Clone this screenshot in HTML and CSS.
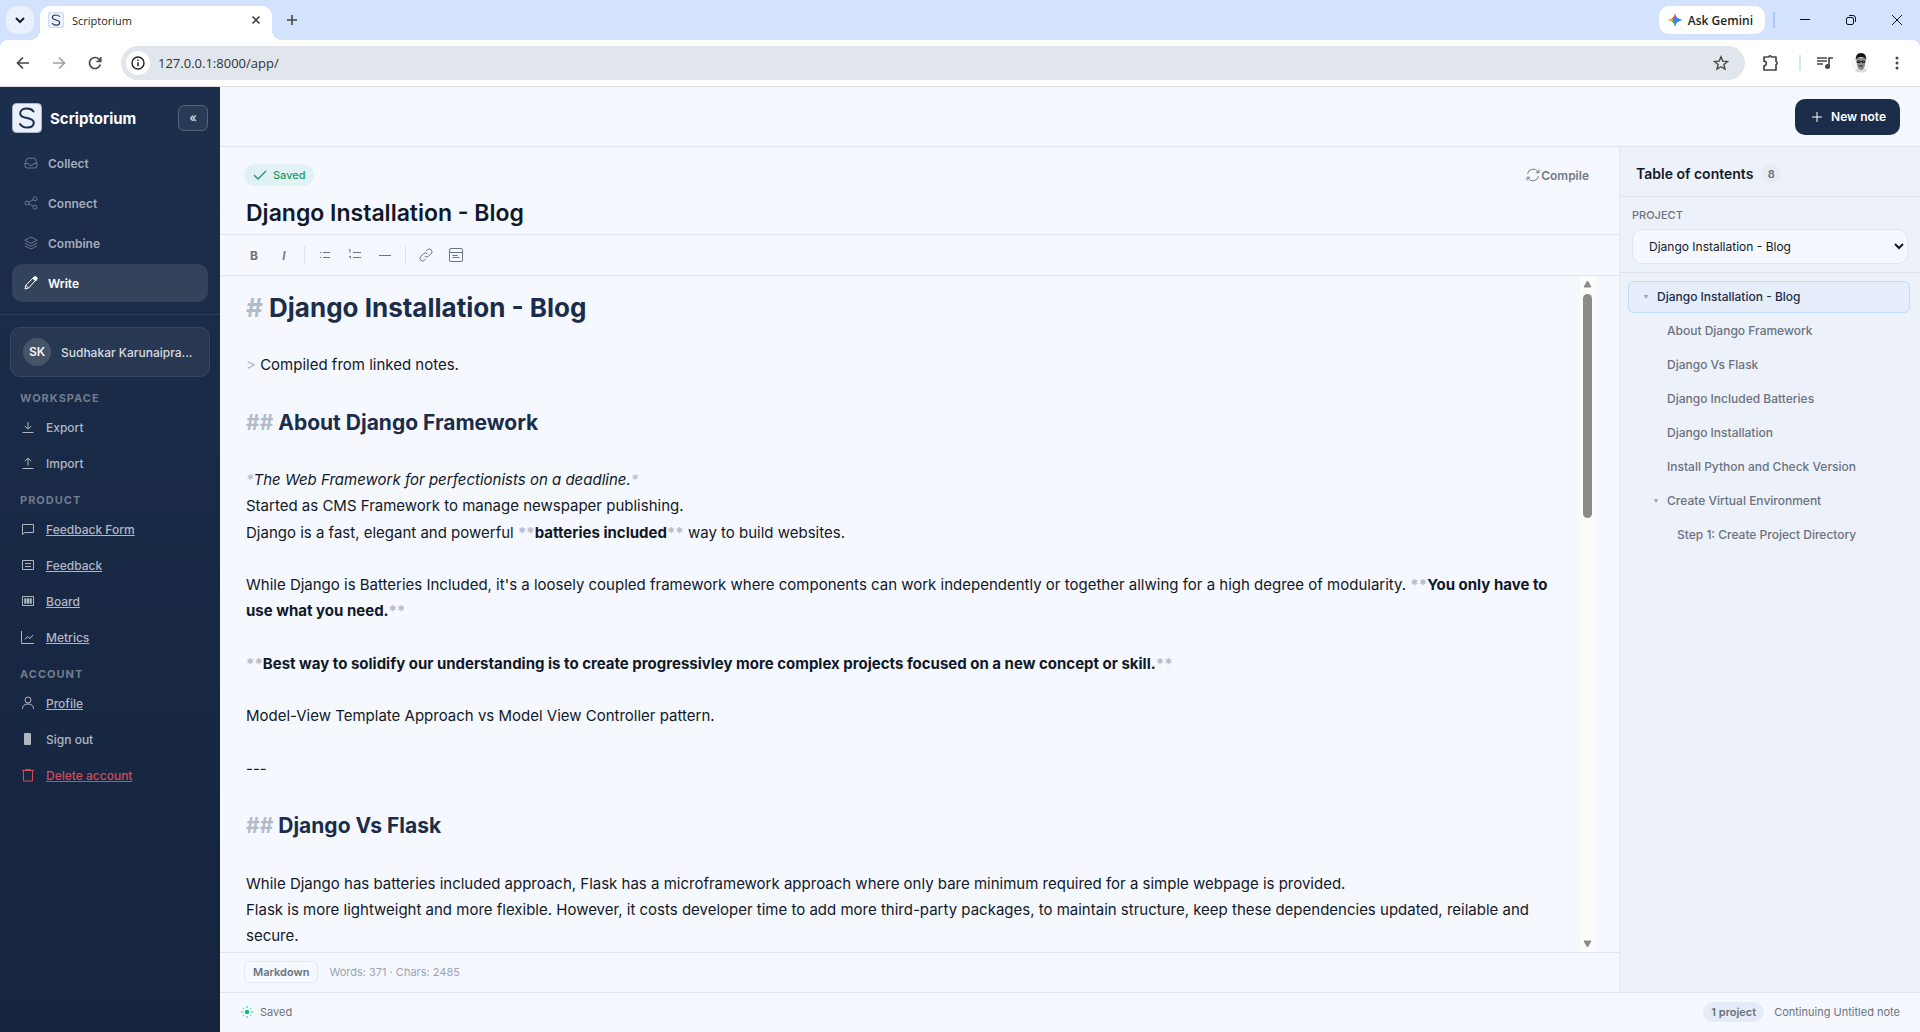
FILE: index.html
```html
<!DOCTYPE html>
<html lang="en">

<head>
    <meta charset="UTF-8">
    <meta name="viewport" content="width=device-width, initial-scale=1.0">
    <title>Scriptorium</title>
    <link rel="stylesheet" href="styles.css">
</head>

<body>

    <!-- shared icons -->
    <svg class="sprite" aria-hidden="true">
        <symbol id="logo" viewBox="0 0 30 30">
            <rect x="0.5" y="0.5" width="29" height="29" rx="4" fill="#e9effb" stroke="#a9b7cf" />
            <path d="M21.5 8.5C20 6.5 17.8 5.6 15 5.6c-4 0-6.8 1.9-6.8 4.8 0 6.400 13.600 3 13.600 9.200 0 3.200-2.800 5-6.600 5-3.200 0-5.700-1.200-7.200-3.600" fill="none" stroke="#1a2d4c" stroke-width="2" stroke-linecap="round" />
        </symbol>
    </svg>

    <header class="browser">
        <div class="tab-strip">
            <button class="tab-search" aria-label="Search tabs">
                <svg width="10" height="7" viewBox="0 0 10 7"><path d="M1 1l4 4 4-4" stroke-width="2" /></svg>
            </button>
            <div class="tab">
                <svg class="favicon" width="16" height="16"><use href="#logo" /></svg>
                <span>Scriptorium</span>
                <button class="plain" aria-label="Close tab">
                    <svg width="10" height="10" viewBox="0 0 10 10"><path d="M1.500 1.500l7 7M8.500 1.500l-7 7" stroke-width="1.600" /></svg>
                </button>
            </div>
            <button class="plain new-tab" aria-label="New tab">
                <svg width="12" height="12" viewBox="0 0 12 12"><path d="M6 1v10M1 6h10" stroke-width="1.600" /></svg>
            </button>
            <button class="gemini">
                <svg width="14" height="14" viewBox="0 0 14 14">
                    <path d="M7 0Q8 6 14 7H7z" fill="#4285f4" stroke="none" />
                    <path d="M14 7Q8 8 7 14V7z" fill="#3186ff" stroke="none" />
                    <path d="M7 14Q6 8 0 7h7z" fill="#34a865" stroke="none" />
                    <path d="M0 7Q6 6 7 0v7z" fill="#ea4335" stroke="none" />
                    <path d="M0 7l4-1 2 1-2 1z" fill="#fbbc04" stroke="none" />
                    <path d="M7 4l7 3-7 3-2-3z" fill="#3b82f6" stroke="none" />
                </svg>
                Ask Gemini
            </button>
            <span class="strip-line"></span>
            <div class="window-buttons">
                <button class="plain" aria-label="Minimize"><svg width="12" height="12" viewBox="0 0 12 12"><path d="M1 5.500h10" /></svg></button>
                <button class="plain" aria-label="Restore"><svg width="12" height="12" viewBox="0 0 12 12"><rect x="1.500" y="3.500" width="7" height="7" rx="1.500" /><path d="M4 1.500h4q2.500 0 2.500 2.500v4" /></svg></button>
                <button class="plain" aria-label="Close"><svg width="12" height="12" viewBox="0 0 12 12"><path d="M1 1l10 10M11 1L1 11" /></svg></button>
            </div>
        </div>

        <div class="address-row">
            <button class="plain" aria-label="Back"><svg width="14" height="14" viewBox="0 0 14 14"><path d="M13 7H2M7 1.500L1.500 7 7 12.500" stroke-width="1.700" /></svg></button>
            <button class="plain faded" aria-label="Forward"><svg width="14" height="14" viewBox="0 0 14 14"><path d="M1 7h11M7 1.500L12.500 7 7 12.500" stroke-width="1.700" /></svg></button>
            <button class="plain" aria-label="Reload"><svg width="14" height="14" viewBox="0 0 14 14"><path d="M12.300 8.500A5.500 5.500 0 1 1 11 3.200l1.500 1.500M12.700 1v4.300H8.500" stroke-width="1.700" /></svg></button>
            <div class="address">
                <span class="info">
                    <svg width="14" height="14" viewBox="0 0 14 14"><circle cx="7" cy="7" r="6" stroke-width="1.400" /><path d="M7 6.200v4M7 3.600v1.400" stroke-width="1.500" /></svg>
                </span>
                <input type="text" aria-label="Address" value="127.0.0.1:8000/app/">
                <button class="plain" aria-label="Bookmark"><svg width="16" height="16" viewBox="0 0 16 16"><path d="M8 1.800l1.800 4.300 4.700.4-3.600 3 1.100 4.600L8 11.700l-4 2.400 1.100-4.600-3.600-3 4.700-.4z" stroke-width="1.400" /></svg></button>
            </div>
            <button class="plain ext" aria-label="Extensions"><svg width="18" height="18" viewBox="0 0 18 18"><path d="M2 3h4.500a1.600 1.600 0 0 1 3 0H14v4.500a1.700 1.700 0 0 1 0 3.200V16H2v-4.200a2.300 2.300 0 0 0 0-4.600z" stroke-width="1.700" stroke-linejoin="round" /></svg></button>
            <span class="strip-line light"></span>
            <button class="plain media" aria-label="Media"><svg width="16" height="14" viewBox="0 0 16 14"><path d="M0 2h10M0 5h10M0 8h6M12 11V2h4" stroke-width="1.700" /><circle cx="10.500" cy="10.500" r="2.500" fill="#474747" stroke="none" /></svg></button>
            <button class="plain profile" aria-label="Profile">
                <svg width="20" height="20" viewBox="0 0 20 20">
                    <circle cx="10" cy="10" r="9.500" fill="#f7f7f7" stroke="none" />
                    <path d="M4 18q1-3 6-3t6 3q-6 3-12 0z" fill="#d9d9d9" stroke="none" />
                    <path d="M6 5h8v7q-1 5-4 5t-4-5z" fill="#8d8d8d" stroke="none" />
                    <path d="M5 8Q4 0 10 0t5 8l-1-3-4-1-4 1z" fill="#111" stroke="none" />
                    <path d="M6 8h3v1.500H6zM11 8h3v1.500h-3zM9 8.500h2M8 13h4" stroke="#222" />
                </svg>
            </button>
            <button class="plain dots" aria-label="Menu"><svg width="4" height="14" viewBox="0 0 4 14"><g fill="#474747" stroke="none"><circle cx="2" cy="2" r="1.500" /><circle cx="2" cy="7" r="1.500" /><circle cx="2" cy="12" r="1.500" /></g></svg></button>
        </div>
    </header>

    <div class="app">
        <aside class="sidebar">
            <div class="brand">
                <svg width="30" height="30"><use href="#logo" /></svg>
                <span class="brand-name">Scriptorium</span>
                <button class="collapse" aria-label="Collapse sidebar">«</button>
            </div>

            <nav class="main-nav">
                <button class="nav-item">
                    <svg width="14" height="14" viewBox="0 0 14 14"><path d="M1 7.500h3.500q.5 2 2.500 2t2.500-2H13M1 7.500V10q0 2 2 2h8q2 0 2-2V7.500L11.500 3q-.3-.8-1.200-.8H3.700q-.9 0-1.200.8z" /></svg>
                    Collect
                </button>
                <button class="nav-item">
                    <svg width="14" height="14" viewBox="0 0 14 14"><circle cx="3" cy="7" r="2" /><circle cx="11" cy="2.800" r="2" /><circle cx="11" cy="11.200" r="2" /><path d="M4.800 6.100l4.400-2.300M4.800 7.900l4.400 2.300" /></svg>
                    Connect
                </button>
                <button class="nav-item">
                    <svg width="14" height="14" viewBox="0 0 14 14"><path d="M7 1L.8 4.200 7 7.300l6.200-3.100zM.8 7L7 10.200 13.200 7M.8 9.900L7 13l6.200-3.100" /></svg>
                    Combine
                </button>
                <button class="nav-item active">
                    <svg width="14" height="14" viewBox="0 0 14 14"><path d="M1 13l.8-3.700L10.200.9q1-.7 2 .3t.4 2L4.600 12zM9 2.200l2.800 2.800M1.800 9.300L4.600 12" /><path d="M9 2.200L10.500 1h2l.7 1.500L11.800 5z" fill="#fff" /></svg>
                    Write
                </button>
            </nav>

            <div class="account">
                <button class="user-card">
                    <span class="avatar">SK</span>
                    <span class="user-name">Sudhakar Karunaipra...</span>
                </button>

                <h2 class="group">Workspace</h2>
                <button class="menu-item"><svg width="14" height="14" viewBox="0 0 14 14"><path d="M1.500 12.500h11M7 2v7M3.800 6L7 9.200 10.200 6" /></svg>Export</button>
                <button class="menu-item"><svg width="14" height="14" viewBox="0 0 14 14"><path d="M1.500 12.500h11M7 9.500V2M3.800 5.200L7 2l3.200 3.200" /></svg>Import</button>

                <h2 class="group">Product</h2>
                <a class="menu-item" href="#"><svg width="14" height="14" viewBox="0 0 14 14"><path d="M1.500 2.500h11v8H4l-2.500 2z" /></svg>Feedback Form</a>
                <a class="menu-item" href="#"><svg width="14" height="14" viewBox="0 0 14 14"><path d="M1.500 2.500h11v9h-11zM4 5.500h6M4 8.500h6" /></svg>Feedback</a>
                <a class="menu-item" href="#"><svg width="14" height="14" viewBox="0 0 14 14"><path d="M1.500 2.500h11v9h-11z" /><path d="M3.500 4.500h2v5h-2zM6 4.500h2v5H6zM8.500 4.500h2v5h-2z" fill="currentColor" stroke="none" /><path d="M4 4v6M7 4v6M10 4v6" /></svg>Board</a>
                <a class="menu-item" href="#"><svg width="14" height="14" viewBox="0 0 14 14"><path d="M.5 1v12.500H13M4 9.500l2.500-3 2.500 2 3-3.500" /></svg>Metrics</a>

                <h2 class="group">Account</h2>
                <a class="menu-item" href="#"><svg width="14" height="14" viewBox="0 0 14 14"><circle cx="7" cy="4" r="3" /><path d="M1.500 13q0-5 5.500-5t5.500 5" /></svg>Profile</a>
                <button class="menu-item"><svg width="14" height="14" viewBox="0 0 14 14"><rect x="3" y="1" width="7" height="12" rx="1" fill="currentColor" stroke="none" /></svg>Sign out</button>
                <a class="menu-item danger" href="#"><svg width="14" height="14" viewBox="0 0 14 14"><path d="M1 2.500h12M4.500 2.500v-1h5v1M2.500 2.500V13h9V2.500" /></svg>Delete account</a>
            </div>
        </aside>

        <div class="workspace">
            <div class="topbar">
                <button class="new-note">
                    <svg width="12" height="12" viewBox="0 0 12 12"><path d="M6 1v10M1 6h10" /></svg>
                    New note
                </button>
            </div>

            <div class="panels">
                <main class="editor">
                    <div class="editor-head">
                        <div class="head-row">
                            <span class="saved-pill">
                                <svg width="14" height="10" viewBox="0 0 14 10"><path d="M1 5l4 4 8-8" stroke-width="1.300" /></svg>
                                Saved
                            </span>
                            <button class="compile">
                                <svg width="14" height="14" viewBox="0 0 14 14"><path d="M1.500 6A5.600 5.600 0 0 1 12 4.200M12.500 8A5.600 5.600 0 0 1 2 9.800M13 1.500v3.200H9.800M1 12.500V9.300h3.200" /></svg>
                                Compile
                            </button>
                        </div>
                        <input class="note-title" type="text" aria-label="Note title" value="Django Installation - Blog">
                    </div>

                    <div class="format-bar">
                        <button aria-label="Bold"><b>B</b></button>
                        <button aria-label="Italic"><i>I</i></button>
                        <span class="bar-line"></span>
                        <button aria-label="Bulleted list"><svg width="14" height="14" viewBox="0 0 14 14"><path d="M5 4.500h7M5 9.500h7M2 4.500h1M2 9.500h1" /></svg></button>
                        <button aria-label="Numbered list"><svg width="14" height="14" viewBox="0 0 14 14"><path d="M5 4.500h8M5 9.500h8M1 1.500h1v3M1 8.500h1.500v2" /></svg></button>
                        <button aria-label="Divider"><svg width="14" height="14" viewBox="0 0 14 14"><path d="M1 7.500h12" /></svg></button>
                        <span class="bar-line"></span>
                        <button aria-label="Link"><svg width="14" height="14" viewBox="0 0 14 14"><path d="M5.800 8.200a2.600 2.600 0 0 0 3.700 0l2.700-2.700a2.600 2.600 0 0 0-3.700-3.700L7.200 3.100M8.200 5.800a2.600 2.600 0 0 0-3.700 0L1.800 8.500a2.600 2.600 0 0 0 3.700 3.700l1.300-1.300" /></svg></button>
                        <button aria-label="Embed"><svg width="14" height="14" viewBox="0 0 14 14"><rect x="0.500" y="0.500" width="13" height="13" rx="1.500" /><path d="M.5 4.500h13M3.500 7.500h5M3.500 9.500h7" /></svg></button>
                    </div>

                    <div class="page">
                        <article class="markdown">
                            <h1><span class="mark">#</span> Django Installation - Blog</h1>
                            <br>
                            <p><span class="mark">&gt;</span> Compiled from linked notes.</p>
                            <br>
                            <h2><span class="mark">##</span> About Django Framework</h2>
                            <br>
                            <p><em><span class="mark">*</span>The Web Framework for perfectionists on a deadline.<span class="mark">*</span></em></p>
                            <p>Started as CMS Framework to manage newspaper publishing.</p>
                            <p>Django is a fast, elegant and powerful <strong><span class="mark">**</span>batteries included<span class="mark">**</span></strong> way to build websites.</p>
                            <br>
                            <p>While Django is Batteries Included, it's a loosely coupled framework where components can work independently or together allwing for a high degree of modularity. <strong><span class="mark">**</span>You only have to use what you need.<span class="mark">**</span></strong></p>
                            <br>
                            <p><strong><span class="mark">**</span>Best way to solidify our understanding is to create progressivley more complex projects focused on a new concept or skill.<span class="mark">**</span></strong></p>
                            <br>
                            <p>Model-View Template Approach vs Model View Controller pattern.</p>
                            <br>
                            <p>---</p>
                            <br>
                            <h2><span class="mark">##</span> Django Vs Flask</h2>
                            <br>
                            <p>While Django has batteries included approach, Flask has a microframework approach where only bare minimum required for a simple webpage is provided.</p>
                            <p>Flask is more lightweight and more flexible. However, it costs developer time to add more third-party packages, to maintain structure, keep these dependencies updated, reilable and secure.</p>
                        </article>
                        <div class="scrollbar" aria-hidden="true">
                            <svg width="9" height="8" viewBox="0 0 9 8"><path d="M4.500 1L8 7H1z" /></svg>
                            <div class="track"><div class="thumb"></div></div>
                            <svg width="9" height="8" viewBox="0 0 9 8"><path d="M4.500 7L8 1H1z" /></svg>
                        </div>
                    </div>

                    <div class="editor-foot">
                        <span class="format-tag">Markdown</span>
                        <span>Words: 371 · Chars: 2485</span>
                    </div>
                </main>

                <aside class="toc">
                    <div class="toc-head">
                        <h2>Table of contents</h2>
                        <span class="count">8</span>
                    </div>
                    <div class="project">
                        <label for="project-select">Project</label>
                        <select id="project-select">
                            <option>Django Installation - Blog</option>
                        </select>
                    </div>
                    <nav class="toc-list">
                        <a class="current open" href="#">Django Installation - Blog</a>
                        <a class="level-2" href="#">About Django Framework</a>
                        <a class="level-2" href="#">Django Vs Flask</a>
                        <a class="level-2" href="#">Django Included Batteries</a>
                        <a class="level-2" href="#">Django Installation</a>
                        <a class="level-2" href="#">Install Python and Check Version</a>
                        <a class="level-2 open" href="#">Create Virtual Environment</a>
                        <a class="level-3" href="#">Step 1: Create Project Directory</a>
                    </nav>
                </aside>
            </div>

            <footer class="status">
                <svg width="12" height="12" viewBox="0 0 12 12"><circle cx="6" cy="6" r="2.200" fill="#10b981" /><g fill="#6fd6b3"><circle cx="6" cy="1" r="1" /><circle cx="6" cy="11" r="1" /><circle cx="1" cy="6" r="1" /><circle cx="11" cy="6" r="1" /><circle cx="2.500" cy="2.500" r=".8" /><circle cx="9.500" cy="2.500" r=".8" /><circle cx="2.500" cy="9.500" r=".8" /><circle cx="9.500" cy="9.500" r=".8" /></g></svg>
                <span>Saved</span>
                <span class="project-count">1 project</span>
                <span>Continuing Untitled note</span>
            </footer>
        </div>
    </div>

</body>

</html>
```

FILE: styles.css
```css
* {
    box-sizing: border-box;
}

body {
    margin: 0;
    height: 100vh;
    display: flex;
    flex-direction: column;
    overflow: hidden;
    font-family: Inter, sans-serif;
    font-size: 12px;
    color: #111827;
    background: #f5f8ff;
}

button,
input,
select {
    font-family: inherit;
    font-size: inherit;
    color: inherit;
}

button {
    border: none;
    background: none;
    padding: 0;
    cursor: pointer;
}

h1,
h2,
p {
    margin: 0;
}

svg {
    flex: none;
    fill: none;
    stroke: currentColor;
}

.sprite {
    display: none;
}

/* Browser frame */
.browser {
    flex: none;
    font-family: "Open Sans", sans-serif;
    color: #1f1f1f;
    background: #d3e2fd;
    border-bottom: 1px solid #dcdfe3;
}

.tab-strip {
    display: flex;
    align-items: center;
    height: 40px;
    padding: 0 6px;
}

.plain {
    display: flex;
    align-items: center;
    justify-content: center;
    flex: none;
    width: 24px;
    height: 24px;
    color: #474747;
}

.tab-search {
    display: flex;
    align-items: center;
    justify-content: center;
    width: 28px;
    height: 28px;
    border-radius: 10px;
    background: #e9f0fe;
}

.tab {
    position: relative;
    display: flex;
    align-items: center;
    align-self: flex-end;
    gap: 8px;
    width: 232px;
    height: 34px;
    margin-left: 6px;
    padding: 0 4px 6px 8px;
    border-radius: 10px 10px 0 0;
    background: #fff;
    font-size: 11px;
}

/* curved feet of the active tab */
.tab::before,
.tab::after {
    content: "";
    position: absolute;
    bottom: 0;
    width: 10px;
    height: 10px;
}

.tab::before {
    left: -10px;
    background: radial-gradient(circle at 0 0, transparent 10px, #fff 10px);
}

.tab::after {
    right: -10px;
    background: radial-gradient(circle at 100% 0, transparent 10px, #fff 10px);
}

.tab span {
    flex: 1;
}

.new-tab {
    margin-left: 8px;
}

.gemini {
    display: flex;
    align-items: center;
    gap: 6px;
    height: 28px;
    margin-left: auto;
    padding: 0 12px 0 9px;
    border-radius: 10px;
    background: #fff;
    font-size: 12px;
    font-weight: 600;
}

.strip-line {
    width: 2px;
    height: 16px;
    margin: 0 8px;
    background: #a8c7fa;
}

.strip-line.light {
    margin: 0 0 0 4px;
    background: #d3e3fd;
}

.window-buttons {
    display: flex;
    gap: 22px;
    margin-left: 10px;
    padding-right: 5px;
}

.window-buttons .plain {
    color: #111;
}

.address-row {
    display: flex;
    align-items: center;
    gap: 12px;
    height: 46px;
    padding: 0 11px;
    border-radius: 8px 8px 0 0;
    background: #fff;
}

.faded {
    opacity: 0.5;
}

.address {
    display: flex;
    align-items: center;
    flex: 1;
    gap: 8px;
    height: 34px;
    margin-left: 2px;
    padding: 0 12px 0 5px;
    border-radius: 17px;
    background: #e1e6ed;
}

.address input {
    flex: 1;
    padding: 0;
    border: none;
    background: none;
    font-size: 13px;
    color: #303236;
}

.info {
    display: flex;
    align-items: center;
    justify-content: center;
    width: 24px;
    height: 24px;
    border-radius: 50%;
    background: #fff;
}

.ext {
    margin-left: 2px;
}

/* App shell */
.app {
    display: flex;
    flex: 1;
    min-height: 0;
}

.sidebar {
    flex: none;
    width: 220px;
    color: #b0b7c3;
    background: linear-gradient(#1b2e4c, #16243d);
}

.brand {
    display: flex;
    align-items: center;
    gap: 8px;
    padding: 16px 12px 11px;
}

.brand-name {
    flex: 1;
    font-size: 15px;
    font-weight: 700;
    color: #fff;
}

.collapse {
    width: 30px;
    height: 26px;
    border: 1px solid #56637a;
    border-radius: 6px;
    background: #293a56;
    font-size: 12px;
    font-weight: 600;
    line-height: 20px;
    color: #d4d8de;
}

.main-nav {
    display: flex;
    flex-direction: column;
    gap: 2px;
    padding: 0 12px 12px;
    border-bottom: 1px solid #2d3e59;
}

.nav-item {
    display: flex;
    align-items: center;
    gap: 10px;
    height: 38px;
    padding: 0 12px;
    border-radius: 10px;
    font-weight: 600;
    color: #a4abb7;
}

.nav-item svg {
    opacity: 0.6;
}

.nav-item.active {
    color: #fff;
    background: #33435c;
}

.nav-item.active svg {
    opacity: 1;
}

.account {
    display: flex;
    flex-direction: column;
    padding-top: 12px;
}

.user-card {
    display: flex;
    align-items: center;
    gap: 10px;
    height: 50px;
    margin: 0 10px 2px;
    padding: 0 12px;
    border: 1px solid #36465f;
    border-radius: 10px;
    background: #283852;
    font-weight: 500;
    color: #d8dce2;
}

.avatar {
    flex: none;
    width: 28px;
    border-radius: 50%;
    background: #46546a;
    font-weight: 600;
    line-height: 28px;
    color: #f3f4f6;
}

.user-name {
    white-space: nowrap;
}

.group {
    padding: 11px 20px 3px;
    font-size: 11px;
    font-weight: 700;
    line-height: 16px;
    letter-spacing: 1px;
    text-transform: uppercase;
    color: #717c8d;
}

.menu-item {
    display: flex;
    align-items: center;
    gap: 11px;
    height: 36px;
    padding: 0 21px;
    font-weight: 500;
    color: #b0b7c3;
}

.menu-item.danger {
    color: #d04c56;
}

/* Workspace */
.workspace {
    display: flex;
    flex-direction: column;
    flex: 1;
    min-width: 0;
}

.topbar {
    display: flex;
    align-items: center;
    justify-content: flex-end;
    height: 60px;
    padding: 0 20px;
    border-bottom: 1px solid #e0e5ef;
}

.new-note {
    display: flex;
    align-items: center;
    gap: 8px;
    height: 36px;
    padding: 0 14px 0 16px;
    border-radius: 10px;
    background: #1b2d4b;
    font-weight: 600;
    color: #fff;
}

.panels {
    display: flex;
    flex: 1;
    min-height: 0;
}

.editor {
    display: flex;
    flex-direction: column;
    flex: 1;
    min-width: 0;
}

.editor-head {
    height: 88px;
    padding: 17px 30px 0 24px;
    border-bottom: 1px solid #e0e5ef;
}

.head-row {
    display: flex;
    align-items: center;
    justify-content: space-between;
}

.saved-pill {
    display: flex;
    align-items: center;
    gap: 6px;
    height: 22px;
    padding: 0 8px 0 9px;
    border-radius: 11px;
    background: #e0f2f3;
    font-size: 11px;
    font-weight: 500;
    color: #159a6c;
}

.compile {
    display: flex;
    align-items: center;
    gap: 1px;
    font-weight: 600;
    color: #737a87;
}

.note-title {
    width: 100%;
    height: 34px;
    margin-top: 10px;
    padding: 0 2px;
    border: none;
    background: none;
    font-size: 23px;
    font-weight: 600;
}

.format-bar {
    display: flex;
    align-items: center;
    gap: 2px;
    height: 41px;
    padding: 0 20px;
    border-bottom: 1px solid #e0e5ef;
    color: #6b7280;
}

.format-bar button {
    display: flex;
    align-items: center;
    justify-content: center;
    width: 28px;
    height: 28px;
}

.format-bar i {
    font-weight: 600;
}

.bar-line {
    width: 1px;
    height: 18px;
    margin: 0 4px;
    background: #dde2ec;
}

.page {
    display: flex;
    flex: 1;
    min-height: 0;
    padding: 0 24px 0 26px;
}

.markdown {
    flex: 1;
    padding: 14px 20px 0 0;
    overflow: hidden;
    font-size: 15px;
    line-height: 1.75;
}

.markdown h1,
.markdown h2 {
    line-height: 36px;
    color: #1b2d4b;
}

.markdown h1 {
    font-size: 26px;
}

.markdown h2 {
    font-size: 21px;
}

.mark {
    color: #b4bac6;
}

.scrollbar {
    display: flex;
    flex-direction: column;
    align-items: center;
    gap: 6px;
    width: 15px;
    padding: 4px 0;
    background: #fcfcfc;
}

.scrollbar path {
    fill: #8b8b8b;
    stroke: #8b8b8b;
    stroke-linejoin: round;
}

.track {
    flex: 1;
}

.thumb {
    width: 9px;
    height: 35%;
    border-radius: 5px;
    background: #8b8b8b;
}

.editor-foot {
    display: flex;
    align-items: center;
    gap: 11px;
    height: 40px;
    padding: 0 24px 1px;
    border-top: 1px solid #e0e5ef;
    font-size: 11px;
    color: #9ca3af;
}

.format-tag {
    padding: 0 8px;
    border: 1px solid #e3e7f1;
    border-radius: 6px;
    font-weight: 600;
    line-height: 20px;
    color: #6b7280;
}

/* Table of contents */
.toc {
    flex: none;
    width: 301px;
    border-left: 1px solid #e0e5ef;
    background: #edf1fa;
}

.toc-head {
    display: flex;
    align-items: center;
    gap: 8px;
    height: 50px;
    padding: 4px 16px 0;
    border-bottom: 1px solid #dde2ec;
}

.toc-head h2 {
    font-size: 14px;
    font-weight: 600;
}

.count,
.project-count {
    border-radius: 10px;
    background: #e6ecf6;
    font-size: 11px;
    font-weight: 600;
    line-height: 20px;
    color: #6b7280;
}

.count {
    width: 20px;
    text-align: center;
}

.project {
    display: flex;
    flex-direction: column;
    gap: 6px;
    padding: 10px 12px 8px;
    border-bottom: 1px solid #dde2ec;
}

.project label {
    font-size: 11px;
    font-weight: 500;
    line-height: 16px;
    text-transform: uppercase;
    color: #6b7280;
}

.project select {
    height: 35px;
    padding: 0 0 0 12px;
    border: 1px solid #e0e5ef;
    border-radius: 10px;
    background: #f5f8ff;
}

.toc-list {
    display: flex;
    flex-direction: column;
    gap: 2px;
    padding: 8px 10px 8px 8px;
}

.toc-list a {
    display: flex;
    align-items: center;
    height: 32px;
    padding: 0 0 2px 28px;
    border: 1px solid transparent;
    border-radius: 6px;
    font-weight: 500;
    text-decoration: none;
    color: #6b7280;
}

.toc-list .current {
    border-color: #bfdbfe;
    background: #e6eefc;
    color: #1b2d4b;
}

.toc-list .level-2 {
    padding-left: 38px;
}

.toc-list .level-3 {
    padding-left: 48px;
}

.toc-list .open::before {
    content: "▾";
    width: 13px;
    margin-left: -13px;
    font-size: 8px;
    color: #9ca3af;
}

/* Status bar */
.status {
    display: flex;
    align-items: center;
    gap: 7px;
    height: 40px;
    padding: 0 20px 1px 21px;
    border-top: 1px solid #e0e5ef;
    font-size: 11px;
    color: #6b7280;
}

.status svg {
    stroke: none;
}

.project-count {
    margin-left: auto;
    margin-right: 3px;
    padding: 0 8px;
}
```
